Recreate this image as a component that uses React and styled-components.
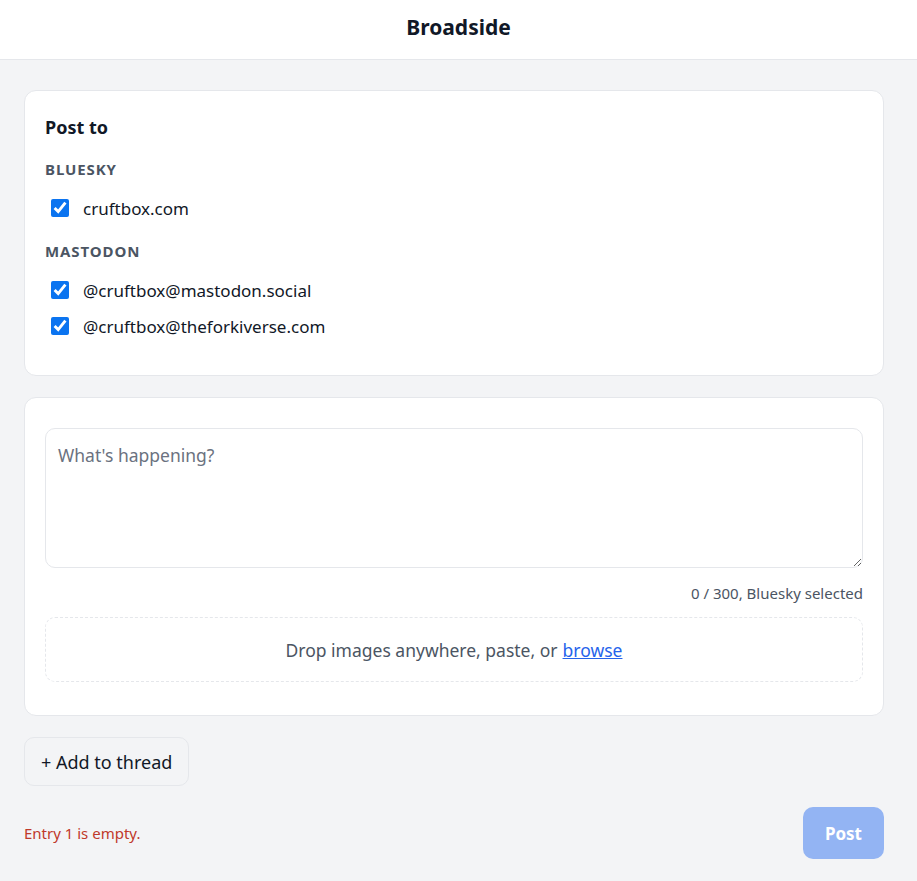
import styled, { createGlobalStyle } from 'styled-components';

const GlobalStyle = createGlobalStyle`
  html, body {
    margin: 0;
    padding: 0;
    background: #f3f4f6;
    font-family: "Noto Sans", "Open Sans", sans-serif;
    color: #111827;
  }
  * { box-sizing: border-box; }
`;

const Header = styled.header`
  height: 60px;
  padding-bottom: 5px;
  background: #ffffff;
  border-bottom: 1px solid #e5e7eb;
  display: flex;
  align-items: center;
  justify-content: center;
`;

const Title = styled.h1`
  margin: 0;
  font-size: 21px;
  font-weight: 700;
  color: #111827;
`;

const Main = styled.main`
  padding: 30px 24px 24px 24px;
  max-width: 908px;
  display: flex;
  flex-direction: column;
  gap: 21px;
`;

const Card = styled.section`
  background: #ffffff;
  border: 1px solid #e5e7eb;
  border-radius: 12px;
  padding: ${(p) => p.$padding || '20px'};
`;

const CardTitle = styled.h2`
  margin: 0 0 16px 0;
  font-size: 18px;
  font-weight: 700;
  line-height: 32px;
`;

const GroupLabel = styled.div`
  font-size: 15px;
  font-weight: 700;
  letter-spacing: 0.06em;
  text-transform: uppercase;
  color: #4b5563;
  margin: ${(p) => (p.$first ? '0' : '15px')} 0 11px 0;
`;

const AccountRow = styled.label`
  display: flex;
  align-items: center;
  gap: 14px;
  height: 36px;
  padding-left: 6px;
  font-size: 17px;
  color: #111827;
  cursor: pointer;
`;

const Check = styled.input`
  width: 18px;
  height: 18px;
  margin: 0;
  accent-color: #0b74f0;
`;

const TextArea = styled.textarea`
  display: block;
  width: 100%;
  height: 140px;
  padding: 14px 12px;
  border: 1px solid #e5e7eb;
  border-radius: 10px;
  font-family: inherit;
  font-size: 17.5px;
  color: #111827;
  resize: vertical;
  outline: none;
  &::placeholder { color: #6b7280; }
`;

const Counter = styled.div`
  text-align: right;
  font-size: 15px;
  color: #4b5563;
  margin: 15px 0 14px 0;
`;

const DropZone = styled.div`
  height: 65px;
  border: 1px dashed #e5e7eb;
  border-radius: 10px;
  display: flex;
  align-items: center;
  justify-content: center;
  font-size: 17.5px;
  color: #4b5563;
`;

const BrowseLink = styled.a`
  color: #2563eb;
  text-decoration: underline;
  margin-left: 5px;
  cursor: pointer;
`;

const ThreadButton = styled.button`
  align-self: flex-start;
  height: 49px;
  padding: 0 16px;
  border: 1px solid #e5e7eb;
  border-radius: 10px;
  background: transparent;
  font-family: inherit;
  font-size: 18px;
  color: #111827;
  cursor: pointer;
`;

const Footer = styled.div`
  display: flex;
  align-items: center;
  justify-content: space-between;
`;

const ErrorText = styled.span`
  font-size: 15px;
  color: #c0392b;
`;

const PostButton = styled.button`
  height: 52px;
  padding: 0 22px;
  border: none;
  border-radius: 10px;
  background: #93b4f3;
  color: #ffffff;
  font-family: inherit;
  font-size: 17px;
  font-weight: 700;
  cursor: not-allowed;
`;

const accounts = [
  { network: 'Bluesky', handles: ['cruftbox.com'] },
  { network: 'Mastodon', handles: ['@cruftbox@mastodon.social', '@cruftbox@theforkiverse.com'] },
];

export default function App() {
  return (
    <>
      <GlobalStyle />
      <Header>
        <Title>Broadside</Title>
      </Header>
      <Main>
        <Card $padding="20px 20px 31px 20px">
          <CardTitle>Post to</CardTitle>
          {accounts.map((group, gi) => (
            <div key={group.network}>
              <GroupLabel $first={gi === 0}>{group.network}</GroupLabel>
              {group.handles.map((handle) => (
                <AccountRow key={handle}>
                  <Check type="checkbox" defaultChecked />
                  {handle}
                </AccountRow>
              ))}
            </div>
          ))}
        </Card>

        <Card $padding="30px 20px 33px 20px">
          <TextArea placeholder="What's happening?" />
          <Counter>0 / 300, Bluesky selected</Counter>
          <DropZone>
            Drop images anywhere, paste, or <BrowseLink>browse</BrowseLink>
          </DropZone>
        </Card>

        <ThreadButton>+ Add to thread</ThreadButton>

        <Footer>
          <ErrorText>Entry 1 is empty.</ErrorText>
          <PostButton disabled>Post</PostButton>
        </Footer>
      </Main>
    </>
  );
}
